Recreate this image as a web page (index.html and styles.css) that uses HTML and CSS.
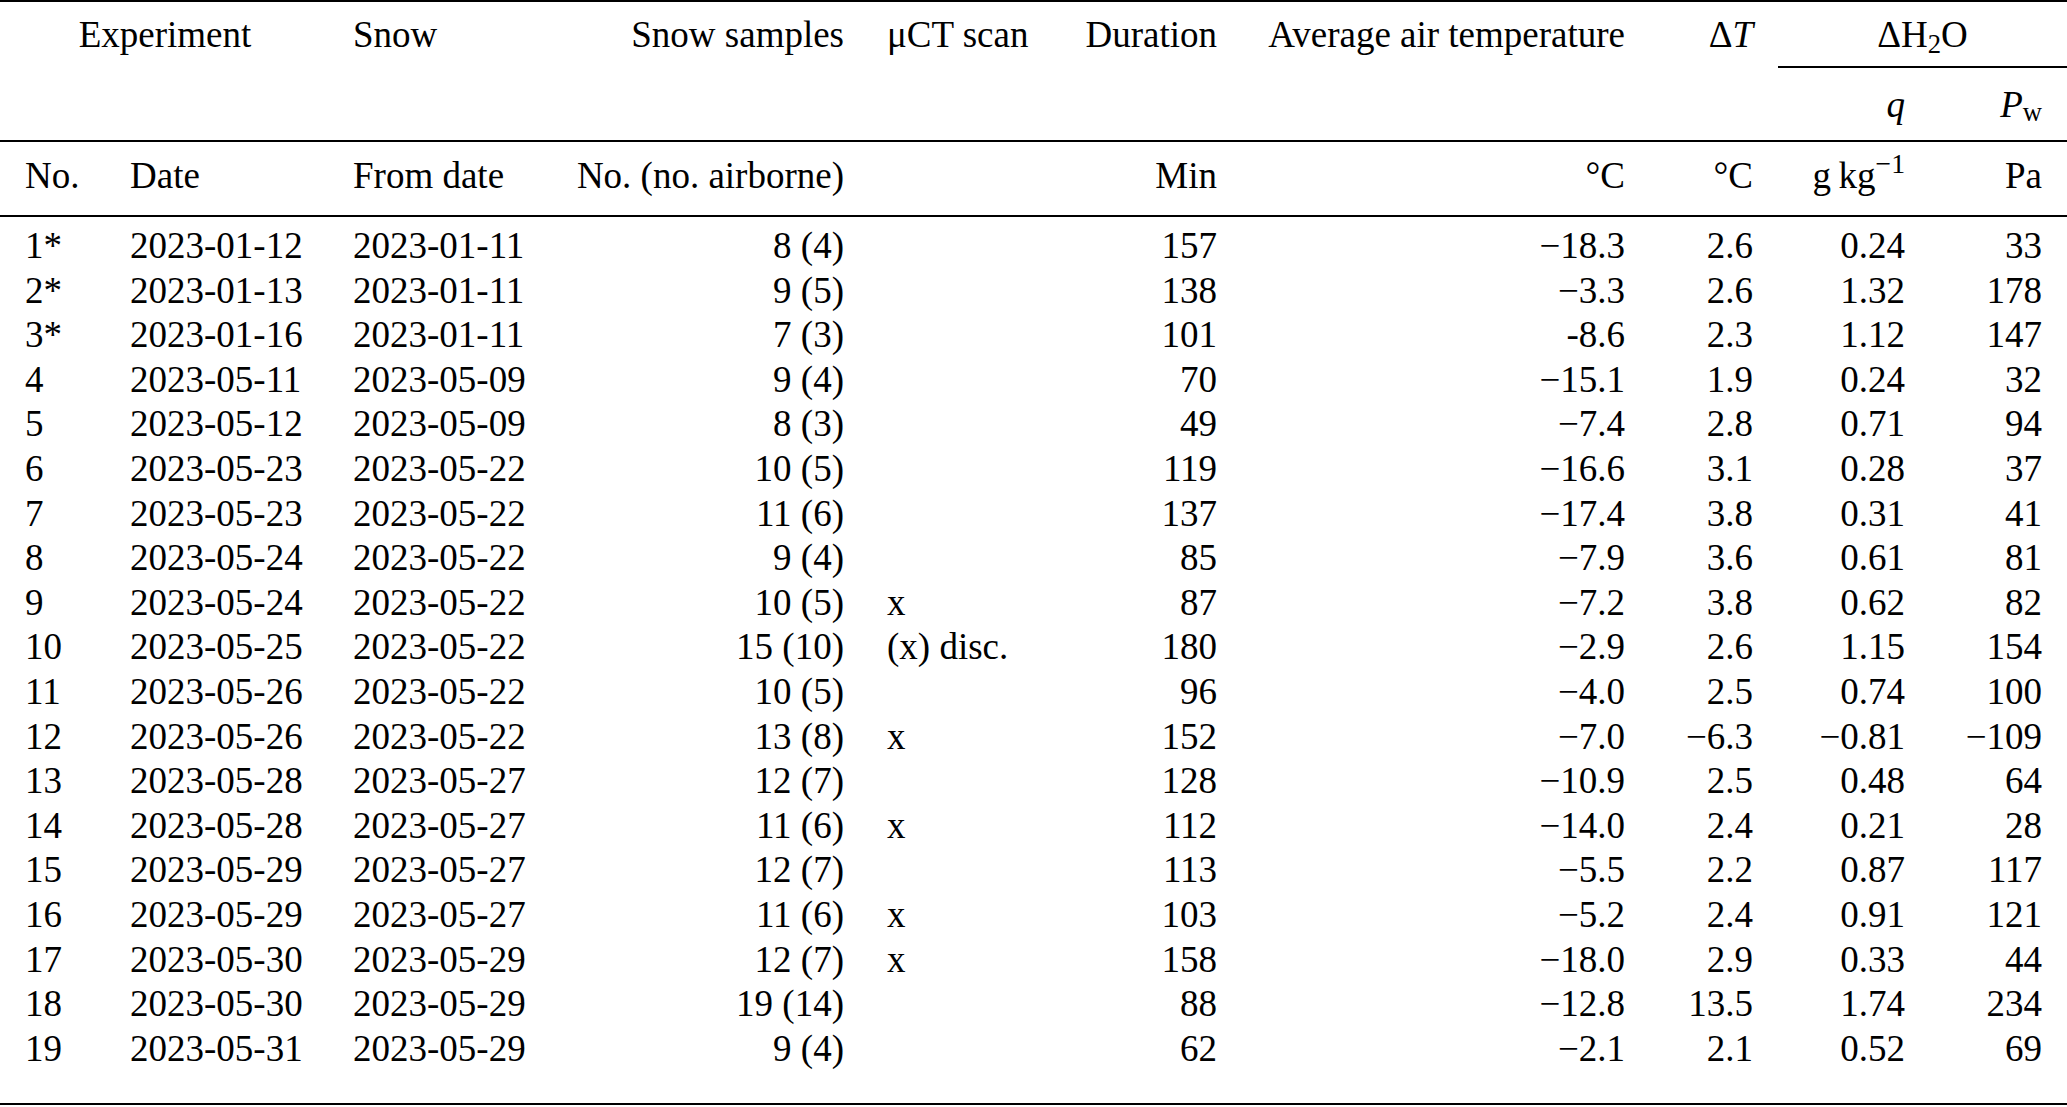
FILE: index.html
```html
<!DOCTYPE html>
<html lang="en">
<head>
<meta charset="utf-8">
<title>Experiments</title>
<link rel="stylesheet" href="styles.css">
</head>
<body>
<table class="tbl">
  <colgroup>
    <col class="w1"><col class="w2"><col class="w3"><col class="w4"><col class="w5">
    <col class="w6"><col class="w7"><col class="w8"><col class="w9"><col class="w10">
  </colgroup>
  <thead>
    <tr class="ha">
      <td class="h-exp" colspan="2">Experiment</td>
      <td class="c3">Snow</td>
      <td class="c4">Snow samples</td>
      <td class="c5">μCT scan</td>
      <td class="c6">Duration</td>
      <td class="c7">Average air temperature</td>
      <td class="c8">Δ<i>T</i></td>
      <td class="h-h2o" colspan="2">ΔH<sub class="sb">2</sub>O</td>
    </tr>
    <tr class="hb">
      <td></td><td></td><td></td><td></td><td></td><td></td><td></td><td></td>
      <td><i>q</i></td>
      <td><i>P</i><sub class="sw">w</sub></td>
    </tr>
    <tr class="hc">
      <td>No.</td><td>Date</td><td>From date</td><td>No. (no. airborne)</td><td></td>
      <td>Min</td><td>°C</td><td>°C</td><td>g&#8201;kg<sup class="sp">−1</sup></td><td>Pa</td>
    </tr>
  </thead>
  <tbody>
    <tr><td>1*</td><td>2023-01-12</td><td>2023-01-11</td><td>8 (4)</td><td></td><td>157</td><td>−18.3</td><td>2.6</td><td>0.24</td><td>33</td></tr>
    <tr><td>2*</td><td>2023-01-13</td><td>2023-01-11</td><td>9 (5)</td><td></td><td>138</td><td>−3.3</td><td>2.6</td><td>1.32</td><td>178</td></tr>
    <tr><td>3*</td><td>2023-01-16</td><td>2023-01-11</td><td>7 (3)</td><td></td><td>101</td><td>-8.6</td><td>2.3</td><td>1.12</td><td>147</td></tr>
    <tr><td>4</td><td>2023-05-11</td><td>2023-05-09</td><td>9 (4)</td><td></td><td>70</td><td>−15.1</td><td>1.9</td><td>0.24</td><td>32</td></tr>
    <tr><td>5</td><td>2023-05-12</td><td>2023-05-09</td><td>8 (3)</td><td></td><td>49</td><td>−7.4</td><td>2.8</td><td>0.71</td><td>94</td></tr>
    <tr><td>6</td><td>2023-05-23</td><td>2023-05-22</td><td>10 (5)</td><td></td><td>119</td><td>−16.6</td><td>3.1</td><td>0.28</td><td>37</td></tr>
    <tr><td>7</td><td>2023-05-23</td><td>2023-05-22</td><td>11 (6)</td><td></td><td>137</td><td>−17.4</td><td>3.8</td><td>0.31</td><td>41</td></tr>
    <tr><td>8</td><td>2023-05-24</td><td>2023-05-22</td><td>9 (4)</td><td></td><td>85</td><td>−7.9</td><td>3.6</td><td>0.61</td><td>81</td></tr>
    <tr><td>9</td><td>2023-05-24</td><td>2023-05-22</td><td>10 (5)</td><td>x</td><td>87</td><td>−7.2</td><td>3.8</td><td>0.62</td><td>82</td></tr>
    <tr><td>10</td><td>2023-05-25</td><td>2023-05-22</td><td>15 (10)</td><td>(x) disc.</td><td>180</td><td>−2.9</td><td>2.6</td><td>1.15</td><td>154</td></tr>
    <tr><td>11</td><td>2023-05-26</td><td>2023-05-22</td><td>10 (5)</td><td></td><td>96</td><td>−4.0</td><td>2.5</td><td>0.74</td><td>100</td></tr>
    <tr><td>12</td><td>2023-05-26</td><td>2023-05-22</td><td>13 (8)</td><td>x</td><td>152</td><td>−7.0</td><td>−6.3</td><td>−0.81</td><td>−109</td></tr>
    <tr><td>13</td><td>2023-05-28</td><td>2023-05-27</td><td>12 (7)</td><td></td><td>128</td><td>−10.9</td><td>2.5</td><td>0.48</td><td>64</td></tr>
    <tr><td>14</td><td>2023-05-28</td><td>2023-05-27</td><td>11 (6)</td><td>x</td><td>112</td><td>−14.0</td><td>2.4</td><td>0.21</td><td>28</td></tr>
    <tr><td>15</td><td>2023-05-29</td><td>2023-05-27</td><td>12 (7)</td><td></td><td>113</td><td>−5.5</td><td>2.2</td><td>0.87</td><td>117</td></tr>
    <tr><td>16</td><td>2023-05-29</td><td>2023-05-27</td><td>11 (6)</td><td>x</td><td>103</td><td>−5.2</td><td>2.4</td><td>0.91</td><td>121</td></tr>
    <tr><td>17</td><td>2023-05-30</td><td>2023-05-29</td><td>12 (7)</td><td>x</td><td>158</td><td>−18.0</td><td>2.9</td><td>0.33</td><td>44</td></tr>
    <tr><td>18</td><td>2023-05-30</td><td>2023-05-29</td><td>19 (14)</td><td></td><td>88</td><td>−12.8</td><td>13.5</td><td>1.74</td><td>234</td></tr>
    <tr><td>19</td><td>2023-05-31</td><td>2023-05-29</td><td>9 (4)</td><td></td><td>62</td><td>−2.1</td><td>2.1</td><td>0.52</td><td>69</td></tr>
  </tbody>
</table>
</body>
</html>
```
FILE: styles.css
```css
html, body {
  margin: 0;
  padding: 0;
  background: #fff;
}

.tbl {
  width: 2067px;
  table-layout: fixed;
  border-collapse: separate;
  border-spacing: 0;
  font-family: "Liberation Serif", "Times New Roman", serif;
  font-size: 37px;
  color: #000;
}

.tbl td {
  padding: 0;
  white-space: nowrap;
  vertical-align: top;
  line-height: 41px;
}

.w1 { width: 115px; }
.w2 { width: 215px; }
.w3 { width: 230px; }
.w4 { width: 300px; }
.w5 { width: 200px; }
.w6 { width: 175px; }
.w7 { width: 410px; }
.w8 { width: 133px; }
.w9 { width: 147px; }
.w10 { width: 142px; }

/* column alignment for full rows */
.hb td:nth-child(1), .hc td:nth-child(1), .tbl tbody td:nth-child(1) { padding-left: 25px; }
.hb td:nth-child(2), .hc td:nth-child(2), .tbl tbody td:nth-child(2) { padding-left: 15px; }
.hb td:nth-child(3), .hc td:nth-child(3), .tbl tbody td:nth-child(3) { padding-left: 23px; }
.hb td:nth-child(4), .hc td:nth-child(4), .tbl tbody td:nth-child(4) { text-align: right; padding-right: 16px; }
.hb td:nth-child(5), .hc td:nth-child(5), .tbl tbody td:nth-child(5) { padding-left: 27px; }
.hb td:nth-child(6), .hc td:nth-child(6), .tbl tbody td:nth-child(6) { text-align: right; padding-right: 18px; }
.hb td:nth-child(7), .hc td:nth-child(7), .tbl tbody td:nth-child(7) { text-align: right; padding-right: 20px; }
.hb td:nth-child(8), .hc td:nth-child(8), .tbl tbody td:nth-child(8) { text-align: right; padding-right: 25px; }
.hb td:nth-child(9), .hc td:nth-child(9), .tbl tbody td:nth-child(9) { text-align: right; padding-right: 20px; }
.hb td:nth-child(10), .hc td:nth-child(10), .tbl tbody td:nth-child(10) { text-align: right; padding-right: 25px; }

/* header row A */
.ha td {
  border-top: 2px solid #000;
  padding-top: 12px;
  padding-bottom: 13px;
}
.ha .h-exp { text-align: center; }
.ha .c3 { padding-left: 23px; }
.ha .c4 { text-align: right; padding-right: 16px; }
.ha .c5 { padding-left: 27px; }
.ha .c6 { text-align: right; padding-right: 18px; }
.ha .c7 { text-align: right; padding-right: 20px; }
.ha .c8 { text-align: right; padding-right: 25px; }
.ha .h-h2o {
  text-align: center;
  padding-bottom: 11px;
  border-bottom: 2px solid #000;
}

/* header row B */
.hb td {
  padding-top: 16px;
  padding-bottom: 15px;
  border-bottom: 2px solid #000;
}

/* header row C */
.hc td {
  padding-top: 13px;
  padding-bottom: 19px;
  border-bottom: 2px solid #000;
}

/* body */
.tbl tbody td { line-height: 44.6px; }
.tbl tbody tr:first-child td { padding-top: 7px; }
.tbl tbody tr:last-child td {
  padding-bottom: 32px;
  border-bottom: 2px solid #000;
}

.sb, .sw, .sp {
  font-size: 0.72em;
  line-height: 0;
}
.sp { font-size: 0.75em; }
.sb { vertical-align: -6px; }
.sw { vertical-align: -4px; }
.sp { vertical-align: 15px; }
```
